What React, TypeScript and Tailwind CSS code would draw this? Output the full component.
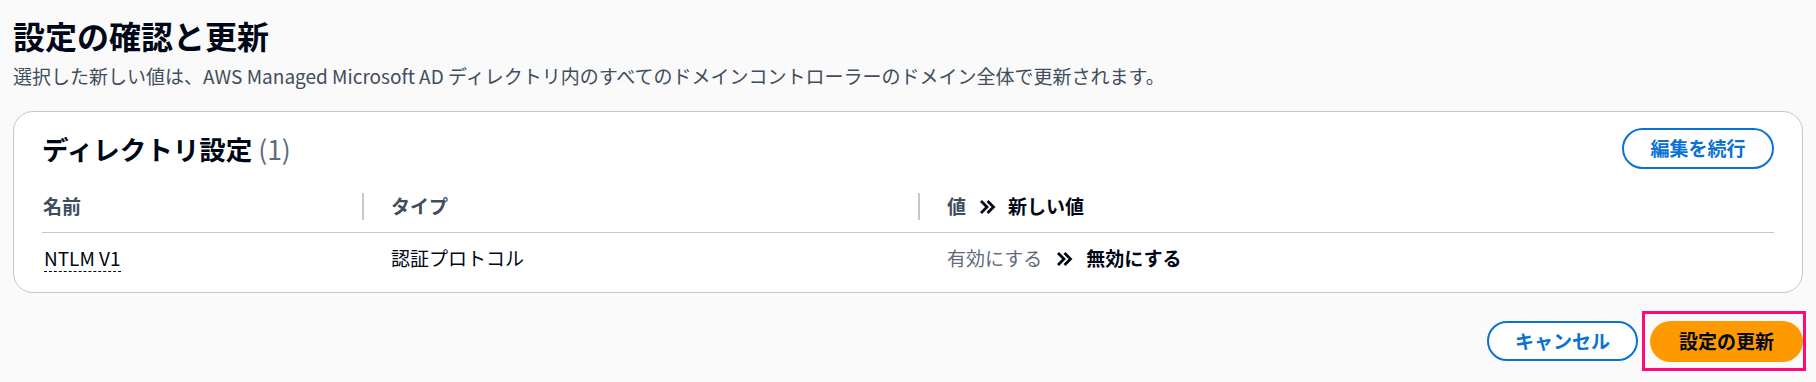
import React from "react";

const DoubleChevron = () => (
  <svg width="18" height="18" viewBox="0 0 18 18" className="shrink-0" aria-hidden="true">
    <path d="M3 3l6 6-6 6M9.5 3l6 6-6 6" fill="none" stroke="#000716" strokeWidth="2.8" strokeLinejoin="miter" strokeLinecap="butt" />
  </svg>
);

export default function App() {
  return (
    <div
      className="min-h-[382px] w-full bg-[#fafafa] px-[13px] pt-[16px] text-[#000716]"
      style={{ fontFamily: '"Noto Sans CJK JP", "Noto Sans", sans-serif' }}
    >
      <h1 className="text-[32px] font-bold leading-[39px] text-[#000716]">設定の確認と更新</h1>
      <p className="mt-[8px] text-[19px] leading-[26px] text-[#414d5c]">
        選択した新しい値は、AWS Managed Microsoft AD ディレクトリ内のすべてのドメインコントローラーのドメイン全体で更新されます。
      </p>

      <div className="mt-[22px] rounded-[20px] border border-[#c6c6cd] bg-white px-[28px] pt-[16px] pb-[8px]">
        <div className="flex h-[41px] items-center justify-between">
          <h2 className="text-[26.5px] font-bold leading-[32px] text-[#000716]">
            ディレクトリ設定 <span className="font-normal text-[#5f6b7a]">(1)</span>
          </h2>
          <button className="h-[41px] w-[152px] rounded-full border-2 border-[#0972d3] bg-white text-[19px] font-bold text-[#0972d3]">
            編集を続行
          </button>
        </div>

        <div className="mt-[12px] grid h-[52px] grid-cols-[322px_556px_1fr] items-center border-b border-[#c6c6cd] text-[19px] font-bold text-[#414d5c]">
          <div className="flex items-center justify-between">
            <span className="pl-[1px]">名前</span>
            <span className="h-[27px] w-[2px] bg-[#c6c6cd]" />
          </div>
          <div className="flex items-center justify-between pl-[27px]">
            <span>タイプ</span>
            <span className="h-[27px] w-[2px] bg-[#c6c6cd]" />
          </div>
          <div className="flex items-center pl-[27px]">
            <span>値</span>
            <span className="mx-[12px] flex"><DoubleChevron /></span>
            <span className="text-[#000716]">新しい値</span>
          </div>
        </div>

        <div className="grid h-[51px] grid-cols-[322px_556px_1fr] items-center text-[19px] text-[#000716]">
          <div className="pl-[2px]">
            <span className="border-b border-dashed border-[#000716] leading-[22px]">NTLM V1</span>
          </div>
          <div className="pl-[27px]">認証プロトコル</div>
          <div className="flex items-center pl-[27px]">
            <span className="text-[#5f6b7a]">有効にする</span>
            <span className="mx-[13px] flex"><DoubleChevron /></span>
            <span className="font-bold">無効にする</span>
          </div>
        </div>
      </div>

      <div className="mt-[28px] flex justify-end gap-[12px]">
        <button className="h-[40px] w-[151px] rounded-full border-2 border-[#0972d3] bg-white text-[19px] font-bold text-[#0972d3]">
          キャンセル
        </button>
        <div className="relative">
          <button className="h-[41px] w-[153px] rounded-full bg-[#ff9900] text-[19px] font-bold text-[#000716]">
            設定の更新
          </button>
          <div className="pointer-events-none absolute -top-[10px] -bottom-[9px] -left-[8px] -right-[3px] border-[3px] border-[#ff0a78]" />
        </div>
      </div>
    </div>
  );
}
